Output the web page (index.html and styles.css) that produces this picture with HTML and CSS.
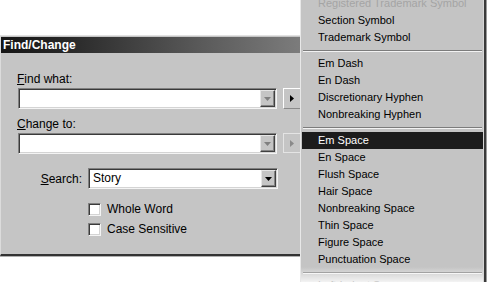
FILE: index.html
```html
<!DOCTYPE html>
<html>
<head>
<meta charset="utf-8">
<link rel="stylesheet" href="styles.css">
</head>
<body>
<div class="stage">
  <div class="dialog">
    <div class="titlebar">Find/Change</div>
    <div class="dlg-body">
      <div class="lbl lbl-find"><u>F</u>ind what:</div>
      <div class="field-row">
        <div class="combo wide">
          <span class="combo-text"></span>
          <span class="drop"><svg width="7" height="4" viewBox="0 0 7 4"><path d="M0 0H7L3.5 4Z" fill="#808080"/></svg></span>
        </div>
        <span class="flyout"><svg width="4" height="7" viewBox="0 0 4 7"><path d="M0 0V7L4 3.5Z" fill="#000"/></svg></span>
      </div>
      <div class="lbl lbl-change"><u>C</u>hange to:</div>
      <div class="field-row">
        <div class="combo wide">
          <span class="combo-text"></span>
          <span class="drop"><svg width="7" height="4" viewBox="0 0 7 4"><path d="M0 0H7L3.5 4Z" fill="#808080"/></svg></span>
        </div>
        <span class="flyout off"><svg width="4" height="7" viewBox="0 0 4 7"><path d="M0 0V7L4 3.5Z" fill="#8a8a8a"/></svg></span>
      </div>
      <div class="search-row">
        <span class="search-lbl"><u>S</u>earch:</span>
        <div class="combo select">
          <span class="combo-text">Story</span>
          <span class="drop"><svg width="7" height="4" viewBox="0 0 7 4"><path d="M0 0H7L3.5 4Z" fill="#000"/></svg></span>
        </div>
      </div>
      <div class="checks">
        <div class="check"><span class="box"></span><span>Whole Word</span></div>
        <div class="check"><span class="box"></span><span>Case Sensitive</span></div>
      </div>
    </div>
  </div>

  <ul class="menu">
    <li class="item faded">Registered Trademark Symbol</li>
    <li class="item">Section Symbol</li>
    <li class="item">Trademark Symbol</li>
    <li class="sep"></li>
    <li class="item">Em Dash</li>
    <li class="item">En Dash</li>
    <li class="item">Discretionary Hyphen</li>
    <li class="item">Nonbreaking Hyphen</li>
    <li class="sep"></li>
    <li class="item active">Em Space</li>
    <li class="item">En Space</li>
    <li class="item">Flush Space</li>
    <li class="item">Hair Space</li>
    <li class="item">Nonbreaking Space</li>
    <li class="item">Thin Space</li>
    <li class="item">Figure Space</li>
    <li class="item">Punctuation Space</li>
    <li class="sep"></li>
    <li class="item">Left Indent Space</li>
  </ul>
</div>
</body>
</html>
```

FILE: styles.css
```css
html, body {
  margin: 0;
  padding: 0;
  background: #fff;
  overflow: hidden;
}

.stage {
  position: relative;
  width: 491px;
  height: 282px;
  overflow: hidden;
  font-family: "Liberation Sans", Arial, sans-serif;
  font-size: 12px;
  color: #000;
}

.dialog {
  margin-top: 35px;
  width: 330px;
  box-sizing: border-box;
  background: #c5c5c5;
  border-top: 1px solid #e2e2e2;
  border-left: 1px solid #dcdcdc;
  border-bottom: 2px solid #333;
  padding-top: 1px;
  box-shadow: 0 1px 0 #b0b0b0;
}

.titlebar {
  height: 16px;
  line-height: 16px;
  padding-left: 2px;
  color: #fff;
  font-weight: bold;
  font-size: 12px;
  background: linear-gradient(to right, #161616 0px, #262626 60px, #5a5a5a 200px, #7c7c7c 300px);
}

.dlg-body {
  padding: 19px 0 15px 16px;
}

.lbl {
  height: 14px;
  line-height: 14px;
}

.lbl-find { margin-bottom: 2px; }
.lbl-change { margin-top: 8px; margin-bottom: 2px; }

.field-row {
  display: flex;
  align-items: flex-start;
  gap: 6px;
  margin-left: 1px;
}

.combo {
  display: flex;
  align-items: center;
  box-sizing: border-box;
  height: 21px;
  padding: 1px;
  background: #fff;
  border: 1px solid;
  border-color: #808080 #f4f4f4 #f4f4f4 #808080;
  box-shadow: inset 1px 1px 0 #3a3a3a, inset -1px -1px 0 #d4d4d4;
}

.combo.wide { width: 259px; }

.combo-text {
  flex: 1;
  padding-left: 3px;
  line-height: 17px;
}

.drop {
  display: flex;
  align-items: center;
  justify-content: center;
  box-sizing: border-box;
  width: 15px;
  height: 17px;
  background: #c5c5c5;
  border: 1px solid;
  border-color: #e6e6e6 #404040 #404040 #e6e6e6;
  box-shadow: inset -1px -1px 0 #848484;
}

.flyout {
  display: flex;
  align-items: center;
  justify-content: center;
  box-sizing: border-box;
  width: 18px;
  height: 21px;
  padding-right: 1px;
  border-left: 1px solid #fff;
  border-top: 1px solid #fff;
  border-bottom: 1px solid #8a8a8a;
}

.flyout.off {
  height: 20px;
  border-color: #e4e4e4;
}

.search-row {
  display: flex;
  align-items: center;
  margin-top: 14px;
}

.search-lbl {
  width: 65px;
  padding-right: 6px;
  text-align: right;
}

.combo.select { width: 190px; }

.checks {
  margin-top: 10px;
  margin-left: 71px;
}

.check {
  display: flex;
  align-items: center;
  gap: 6px;
  height: 20px;
}

.box {
  box-sizing: border-box;
  width: 13px;
  height: 13px;
  background: #fff;
  border: 1px solid;
  border-color: #808080 #f4f4f4 #f4f4f4 #808080;
  box-shadow: inset 1px 1px 0 #3a3a3a, inset -1px -1px 0 #d4d4d4;
}

.menu {
  position: absolute;
  left: 300px;
  top: -5px;
  width: 184px;
  height: 287px;
  box-sizing: border-box;
  margin: 0;
  padding: 0 0 0 1px;
  list-style: none;
  overflow: hidden;
  background: #c4c4c4;
  border-left: 1px solid #e8e8e8;
  border-right: 1px solid #d6d6d6;
  box-shadow: 2px 0 0 #3a3a3a, 3px 0 0 #9a9a9a;
  font-size: 11px;
}

.menu::after {
  content: "";
  position: absolute;
  left: 0;
  right: 0;
  bottom: 0;
  height: 15px;
  background: linear-gradient(to bottom, rgba(255,255,255,0), rgba(255,255,255,0.8));
}

.item {
  height: 17px;
  line-height: 17px;
  padding-left: 16px;
  white-space: nowrap;
}

.item.faded { color: #a4a4a4; }

.item.active {
  background: #1c1c1c;
  color: #fff;
}

.sep {
  height: 9px;
  box-sizing: border-box;
  padding-top: 4px;
  margin: 0 1px 0 1px;
}

.sep::before {
  content: "";
  display: block;
  border-top: 1px solid #7c7c7c;
  border-bottom: 1px solid #f2f2f2;
}
```
